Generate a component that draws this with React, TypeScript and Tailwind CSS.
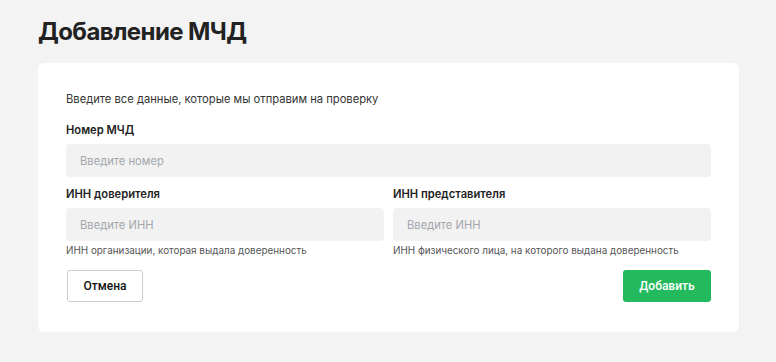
export default function App() {
  return (
    <div className="min-h-[362px] w-[776px] bg-[#f3f3f3] px-[38px] pt-[17px] font-['Inter',sans-serif] text-[#1f1f1f]">
      <h1 className="text-[24px] leading-[30px] font-bold tracking-[-0.6px] text-[#222]">Добавление МЧД</h1>
      <div className="mt-[16px] w-[701px] rounded-[6px] bg-white px-[28px] pt-[28px] pb-[30px]">
        <p className="text-[11.2px] leading-[16px] text-[#333]">Введите все данные, которые мы отправим на проверку</p>

        <label className="mt-[15px] block text-[11.2px] leading-[16px] font-semibold text-[#222]">Номер МЧД</label>
        <input
          placeholder="Введите номер"
          className="mt-[6px] h-[33px] w-full rounded-[4px] bg-[#f2f2f2] px-[14px] text-[11.2px] outline-none placeholder:text-[#a3a7ae]"
        />

        <div className="mt-[9px] grid grid-cols-2 gap-x-[9px]">
          <div>
            <label className="block text-[11.2px] leading-[16px] font-semibold text-[#222]">ИНН доверителя</label>
            <input
              placeholder="Введите ИНН"
              className="mt-[6px] h-[33px] w-full rounded-[4px] bg-[#f2f2f2] px-[14px] text-[11.2px] outline-none placeholder:text-[#a3a7ae]"
            />
            <p className="mt-[3px] text-[9.9px] leading-[12px] text-[#555]">ИНН организации, которая выдала доверенность</p>
          </div>
          <div>
            <label className="block text-[11.2px] leading-[16px] font-semibold text-[#222]">ИНН представителя</label>
            <input
              placeholder="Введите ИНН"
              className="mt-[6px] h-[33px] w-full rounded-[4px] bg-[#f2f2f2] px-[14px] text-[11.2px] outline-none placeholder:text-[#a3a7ae]"
            />
            <p className="mt-[3px] text-[9.9px] leading-[12px] text-[#555]">ИНН физического лица, на которого выдана доверенность</p>
          </div>
        </div>

        <div className="mt-[14px] flex items-center justify-between">
          <button className="ml-[1px] h-[32px] w-[76px] rounded-[3px] border border-[#c9ced6] bg-white font-['Roboto',sans-serif] text-[12px] font-medium text-[#111]">
            Отмена
          </button>
          <button className="h-[32px] w-[88px] rounded-[3px] bg-[#23ba5e] font-['Roboto',sans-serif] text-[12px] font-medium text-white">
            Добавить
          </button>
        </div>
      </div>
    </div>
  );
}
